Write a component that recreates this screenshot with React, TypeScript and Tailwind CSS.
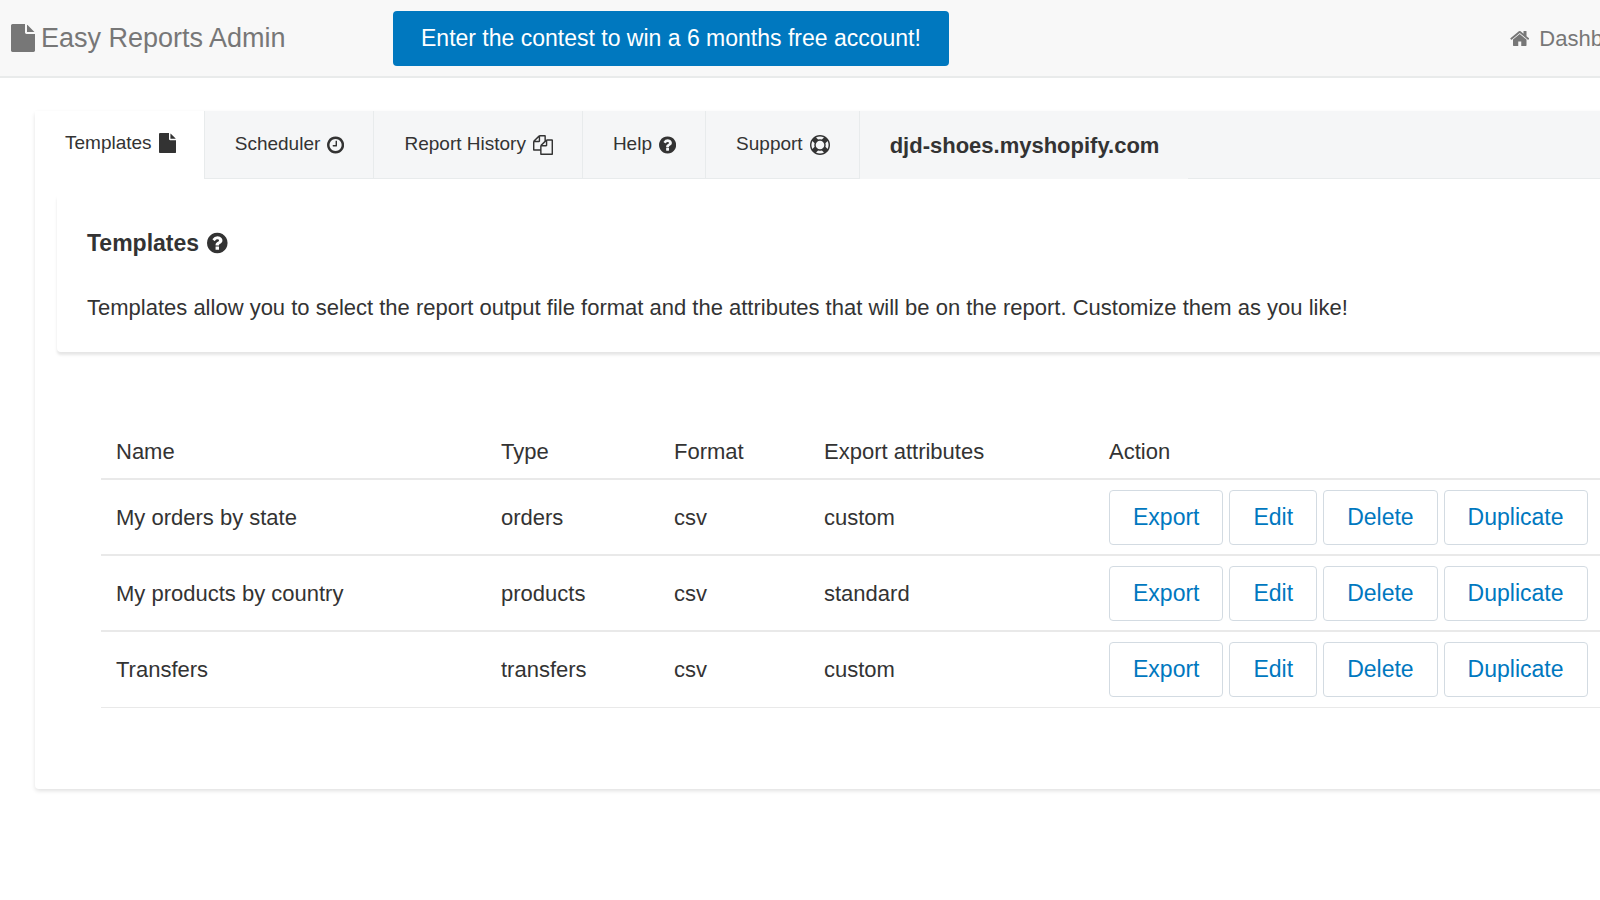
import type { ReactNode } from "react";

type Glyph = { viewBox: string; path: string };

const FILE: Glyph = {
  viewBox: "128 0 1536 1792",
  path: "M1152 512v-472q22 14 36 28l408 408q14 14 28 36h-472zm-128 32q0 40 28 68t68 28h544v1056q0 40-28 68t-68 28h-1344q-40 0-68-28t-28-68v-1600q0-40 28-68t68-28h800v544z",
};
const CLOCK: Glyph = {
  viewBox: "128 0 1536 1792",
  path: "M1024 544v448q0 14-9 23t-23 9h-320q-14 0-23-9t-9-23v-64q0-14 9-23t23-9h224v-352q0-14 9-23t23-9h64q14 0 23 9t9 23zm416 352q0-148-73-273t-198-198-273-73-273 73-198 198-73 273 73 273 198 198 273 73 273-73 198-198 73-273zm224 0q0 209-103 385.5t-279.5 279.5-385.5 103-385.5-103-279.5-279.5-103-385.5 103-385.5 279.5-279.5 385.5-103 385.5 103 279.5 279.5 103 385.5z",
};
const FILES: Glyph = {
  viewBox: "0 0 1792 1792",
  path: "M1696 384q40 0 68 28t28 68v1216q0 40-28 68t-68 28h-960q-40 0-68-28t-28-68v-288h-544q-40 0-68-28t-28-68v-672q0-40 20-88t48-76l408-408q28-28 76-48t88-20h416q40 0 68 28t28 68v328q68-40 128-40h416zm-544 213l-299 299h299v-299zm-640-384l-299 299h299v-299zm196 647l316-316v-416h-384v416q0 40-28 68t-68 28h-416v640h512v-256q0-40 20-88t48-76zm956 804v-1152h-384v416q0 40-28 68t-68 28h-416v640h896z",
};
const QUESTION: Glyph = {
  viewBox: "128 0 1536 1792",
  path: "M1024 1376v-192q0-14-9-23t-23-9h-192q-14 0-23 9t-9 23v192q0 14 9 23t23 9h192q14 0 23-9t9-23zm256-672q0-88-55.5-163t-138.5-116-170-41q-243 0-371 213-15 24 8 42l132 100q7 6 19 6 16 0 25-12 53-68 86-92 34-24 86-24 48 0 85.5 26t37.5 59q0 38-20 61t-68 45q-63 28-115.5 86.5t-52.5 125.5v36q0 14 9 23t23 9h192q14 0 23-9t9-23q0-19 21.5-49.5t54.5-49.5q32-18 49-28.5t46-35 44.5-48 28-60.5 12.5-81zm384 192q0 209-103 385.5t-279.5 279.5-385.5 103-385.5-103-279.5-279.5-103-385.5 103-385.5 279.5-279.5 385.5-103 385.5 103 279.5 279.5 103 385.5z",
};
const LIFE_RING: Glyph = {
  viewBox: "0 0 1792 1792",
  path: "M896 0q182 0 348 71t286 191 191 286 71 348-71 348-191 286-286 191-348 71-348-71-286-191-191-286-71-348 71-348 191-286 286-191 348-71zm0 128q-190 0-361 90l194 194q82-28 167-28t167 28l194-194q-171-90-361-90zm-678 1129l194-194q-28-82-28-167t28-167l-194-194q-90 171-90 361t90 361zm678 407q190 0 361-90l-194-194q-82 28-167 28t-167-28l-194 194q171 90 361 90zm0-384q159 0 271.5-112.5t112.5-271.5-112.5-271.5-271.5-112.5-271.5 112.5-112.5 271.5 112.5 271.5 271.5 112.5zm484-217l194 194q90-171 90-361t-90-361l-194 194q28 82 28 167t-28 167z",
};
const HOME: Glyph = {
  viewBox: "64 0 1664 1792",
  path: "M1472 992v480q0 26-19 45t-45 19h-384v-384h-256v384h-384q-26 0-45-19t-19-45v-480q0-1 .5-3t.5-3l575-474 575 474q1 2 1 6zm223-69l-62 74q-8 9-21 11h-3q-13 0-21-7l-692-577-692 577q-12 8-24 7-13-2-21-11l-62-74q-8-10-7-23.5t11-21.5l719-599q32-26 76-26t76 26l244 204v-195q0-14 9-23t23-9h192q14 0 23 9t9 23v408l219 182q10 8 11 21.5t-7 23.5z",
};

const Icon = ({ glyph, className = "" }: { glyph: Glyph; className?: string }) => (
  <svg
    viewBox={glyph.viewBox}
    fill="currentColor"
    aria-hidden="true"
    className={`w-auto shrink-0 ${className}`}
  >
    <path d={glyph.path} />
  </svg>
);

const tabs = [
  { label: "Scheduler", glyph: CLOCK },
  { label: "Report History", glyph: FILES },
  { label: "Help", glyph: QUESTION },
  { label: "Support", glyph: LIFE_RING },
];

const templates = [
  { name: "My orders by state", type: "orders", format: "csv", attributes: "custom" },
  { name: "My products by country", type: "products", format: "csv", attributes: "standard" },
  { name: "Transfers", type: "transfers", format: "csv", attributes: "custom" },
];

const actions = ["Export", "Edit", "Delete", "Duplicate"];

const HeadCell = ({ className = "", children }: { className?: string; children: ReactNode }) => (
  <th scope="col" className={`h-[55px] pl-[15px] text-left font-normal ${className}`}>
    {children}
  </th>
);

const App = () => {
  return (
    <div className="min-h-screen overflow-x-hidden bg-white font-['Liberation_Sans',Arial,sans-serif] text-[22px] text-[#333]">
      {/* the bar runs on past the right edge of the window */}
      <header className="-mr-[47px] flex h-[78px] items-center border-b-2 border-[#e9ebeb] bg-[#f8f8f8] pl-[11px] text-[#777]">
        <a href="#" className="flex w-[382px] shrink-0 items-center gap-[6px] text-[27px]">
          <Icon glyph={FILE} className="h-7" />
          Easy Reports Admin
        </a>
        <button className="h-[55px] rounded-[4px] bg-[#0078bf] px-[28px] text-[23px] text-white">
          Enter the contest to win a 6 months free account!
        </button>
        <a href="#" className="ml-auto flex items-center gap-[10px]">
          <Icon glyph={HOME} className="h-[21px]" />
          Dashboard
        </a>
      </header>

      <main className="mt-[33px] -mr-2 ml-[35px] rounded-[4px] pb-[81px] shadow-[0_2px_4px_rgba(0,0,0,0.12)]">
        <nav className="flex h-[68px] bg-[#f5f6f7] text-[19px]">
          <a href="#" className="flex items-center gap-[7px] bg-white pr-[28px] pb-1 pl-[30px]">
            Templates
            <Icon glyph={FILE} className="h-5" />
          </a>
          {tabs.map((tab) => (
            <a
              key={tab.label}
              href="#"
              className="flex items-center gap-[7px] border-b border-l border-[#e8ebec] pr-[29px] pl-[30px]"
            >
              {tab.label}
              <Icon glyph={tab.glyph} className="h-5" />
            </a>
          ))}
          <span className="flex items-center border-l border-[#e8ebec] pr-[29px] pl-[30px] text-[22px] font-bold">
            djd-shoes.myshopify.com
          </span>
          <span className="flex-1 border-b border-[#e8ebec]" />
        </nav>

        <section className="mt-[15px] ml-[22px] rounded-[4px] px-[30px] pt-[34px] pb-[29px] shadow-[0_3px_3px_rgba(0,0,0,0.1)]">
          <h1 className="flex items-center gap-2 text-[23px] leading-[30px] font-bold">
            Templates
            <Icon glyph={QUESTION} className="h-6" />
          </h1>
          <p className="mt-[35px] leading-[30px]">
            Templates allow you to select the report output file format and the attributes that
            will be on the report. Customize them as you like!
          </p>
        </section>

        <div className="mt-[72px] ml-[66px]">
          <table className="w-full border-collapse whitespace-nowrap">
            <thead>
              <tr>
                <HeadCell className="w-[385px]">Name</HeadCell>
                <HeadCell className="w-[173px]">Type</HeadCell>
                <HeadCell className="w-[150px]">Format</HeadCell>
                <HeadCell className="w-[285px]">Export attributes</HeadCell>
                <HeadCell>Action</HeadCell>
              </tr>
            </thead>
            <tbody>
              {templates.map((template) => (
                <tr key={template.name} className="h-[76px] border-t-2 border-[#e9e9e9] last:border-b">
                  <td className="pl-[15px]">{template.name}</td>
                  <td className="pl-[15px]">{template.type}</td>
                  <td className="pl-[15px]">{template.format}</td>
                  <td className="pl-[15px]">{template.attributes}</td>
                  <td className="pl-[15px]">
                    <div className="flex gap-[6px]">
                      {actions.map((action) => (
                        <button
                          key={action}
                          className="h-[55px] rounded-[4px] border border-[#d3dbe2] px-[23px] text-[23px] text-[#0078bf]"
                        >
                          {action}
                        </button>
                      ))}
                    </div>
                  </td>
                </tr>
              ))}
            </tbody>
          </table>
        </div>
      </main>
    </div>
  );
};

export default App;
